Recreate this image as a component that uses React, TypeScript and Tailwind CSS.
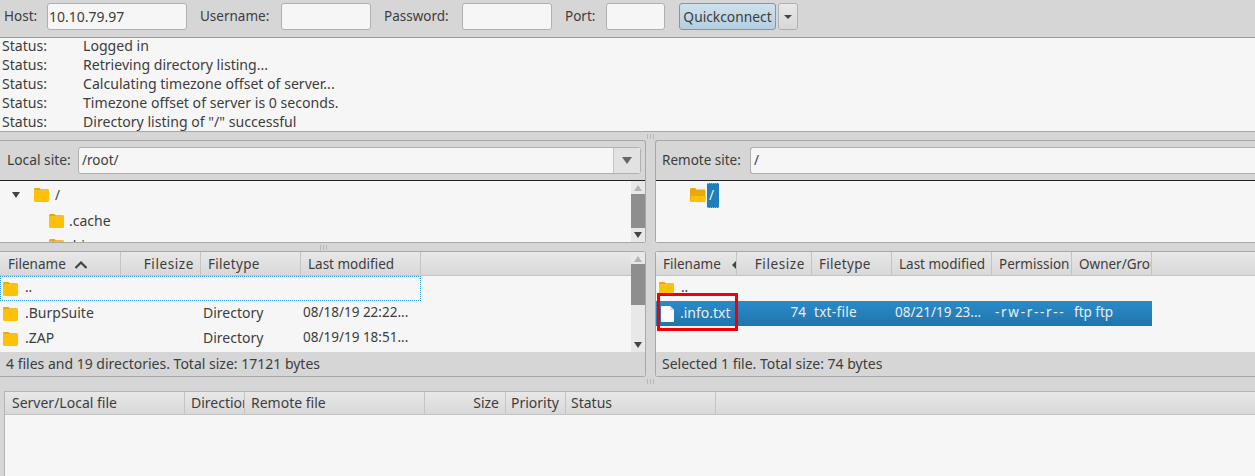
const FONT = "font-['Noto_Sans',sans-serif]";

function Folder({ open = false }: { open?: boolean }) {
    if (open) {
        return (
            <svg width="16" height="14" viewBox="0 0 16 14" className="shrink-0">
                <path d="M0 1.5C0 .7.5 0 1.2 0h4l1.4 1.6h7.6c.8 0 1.2.6 1.2 1.3V14H0z" fill="#e8a90c" />
                <path d="M1.6 8h14.4l-.8 5.2c-.1.5-.4.8-.9.8H0z" fill="#ffc107" />
            </svg>
        );
    }
    return (
        <svg width="15" height="14" viewBox="0 0 15 14" className="shrink-0">
            <path d="M0 1.4C0 .6.6 0 1.3 0h4.2l1.3 1.2h7c.7 0 1.2.6 1.2 1.3V2.800H0z" fill="#e8a90c" />
            <path d="M0 2.600h15v10.200c0 .7-.5 1.200-1.200 1.200H1.200C.5 14 0 13.500 0 12.800z" fill="#ffc107" />
        </svg>
    );
}

function FileIcon() {
    return (
        <svg width="13" height="16" viewBox="0 0 13 16" className="shrink-0">
            <path d="M1 0h8l4 4v11a1 1 0 0 1-1 1H1a1 1 0 0 1-1-1V1a1 1 0 0 1 1-1z" fill="#fafafa" />
            <path d="M9 0l4 4H9z" fill="#d4dde3" />
        </svg>
    );
}

function Field({ label, labelW, inputW, value }: { label: string; labelW: string; inputW: string; value?: string }) {
    return (
        <div className="flex items-center">
            <span className={`${labelW} whitespace-nowrap`}>{label}</span>
            <div className={`${inputW} h-[27px] rounded-[3px] border border-[#b0b0b0] bg-[#f6f6f6] pl-[1px] text-[14px] leading-[25px]`}>{value}</div>
        </div>
    );
}

function Scrollbar({ thumbTop, thumbH }: { thumbTop: string; thumbH: string }) {
    return (
        <div className="flex w-[14px] shrink-0 flex-col items-center bg-[#e8e8e8] py-[4px]">
            <div className="h-0 w-0 border-x-[4px] border-b-[6px] border-x-transparent border-b-[#b4b4b4]" />
            <div className={`w-full ${thumbTop} ${thumbH} bg-[#8e8e8e]`} />
            <div className="mt-auto h-0 w-0 border-x-[4px] border-t-[6px] border-x-transparent border-t-[#444444]" />
        </div>
    );
}

function HeaderCell({ w, right, children }: { w: string; right?: boolean; children: React.ReactNode }) {
    return (
        <div className={`${w} flex h-full shrink-0 items-center overflow-hidden whitespace-nowrap border-r border-[#c4c4c4] pl-[7px] pt-[2px] ${right ? "justify-end pr-[6px]" : ""}`}>
            {children}
        </div>
    );
}

const headerBg = "bg-gradient-to-b from-[#e8e8e8] to-[#d8d8d8]";

function Grip() {
    return (
        <div className="flex gap-[2px]">
            <div className="h-[5px] w-px bg-[#b8b8b8]" />
            <div className="h-[5px] w-px bg-[#b8b8b8]" />
            <div className="h-[5px] w-px bg-[#b8b8b8]" />
        </div>
    );
}

function LocalRow({ name, type, date }: { name: string; type: string; date: string }) {
    return (
        <div className="flex h-[25px] w-[421px] items-center">
            <div className="flex w-[200px] items-center gap-[7px] pl-[3px] text-[14px]">
                <Folder />
                <span className="pb-[2px]">{name}</span>
            </div>
            <span className="w-[100px] pb-[2px] pl-[3px] text-[14px]">{type}</span>
            <span className="pb-[2px] pl-[3px]">{date}</span>
        </div>
    );
}

export default function App() {
    const log = [
        "Logged in",
        "Retrieving directory listing...",
        "Calculating timezone offset of server...",
        "Timezone offset of server is 0 seconds.",
        'Directory listing of "/" successful',
    ];

    return (
        <div className={`${FONT} relative flex h-[476px] w-[1255px] flex-col overflow-hidden bg-[#d6d6d6] text-[13.5px] text-[#3d3d3d]`}>
            {/* quickconnect bar */}
            <div className="flex h-[38px] shrink-0 items-start gap-[13px] border-b border-[#9a9a9a] pl-[4px] pt-[3px] leading-[27px]">
                <Field label="Host:" labelW="w-[43px]" inputW="w-[140px]" value="10.10.79.97" />
                <Field label="Username:" labelW="w-[81px]" inputW="w-[90px]" />
                <Field label="Password:" labelW="w-[78px]" inputW="w-[90px]" />
                <Field label="Port:" labelW="w-[41px]" inputW="w-[59px]" />
                <div className="ml-px flex gap-[2px]">
                    <div className="flex h-[27px] w-[97px] items-center justify-center rounded-[3px] border border-[#7f98a8] bg-gradient-to-b from-[#cfe1ec] to-[#b4cfdf] text-[13.8px]">Quickconnect</div>
                    <div className="flex h-[27px] w-[20px] items-center justify-center rounded-[3px] border border-[#b0b0b0] bg-gradient-to-b from-[#e8e8e8] to-[#d8d8d8]">
                        <div className="h-0 w-0 border-x-[4px] border-t-[4px] border-x-transparent border-t-[#444444]" />
                    </div>
                </div>
            </div>

            {/* message log */}
            <div className="h-[94px] shrink-0 border-b border-[#a8a8a8] bg-[#f6f6f6] pl-[2px] text-[14.1px] leading-[15px]">
                {log.map((m) => (
                    <div key={m} className="flex h-[19px] items-center whitespace-nowrap first:h-[17px] first:items-start">
                        <span className="w-[81px]">Status:</span>
                        <span>{m}</span>
                    </div>
                ))}
            </div>

            <div className="flex h-[8px] shrink-0 items-center pl-[647px]">
                <Grip />
            </div>

            {/* site panes */}
            <div className="flex h-[237px] shrink-0 gap-[9px]">
                {/* local */}
                <div className="flex w-[646px] shrink-0 flex-col">
                    <div className="flex h-[103px] flex-col rounded-r-[3px] border border-l-0 border-[#a8a8a8]">
                        <div className="flex h-[40px] shrink-0 items-center border-b border-[#222222] pl-[7px]">
                            <span className="w-[71px] whitespace-nowrap text-[13.8px]">Local site:</span>
                            <div className="flex h-[27px] w-[563px] rounded-[3px] border border-[#b0b0b0] bg-[#f6f6f6]">
                                <span className="flex-1 pl-[3px] leading-[25px]">/root/</span>
                                <div className="flex w-[27px] items-center justify-center border-l border-[#c4c4c4] bg-[#e2e2e2]">
                                    <div className="h-0 w-0 border-x-[5px] border-t-[7px] border-x-transparent border-t-[#666666]" />
                                </div>
                            </div>
                        </div>
                        <div className="flex min-h-0 flex-1 bg-[#f6f6f6]">
                            <div className="flex-1 overflow-hidden pt-[1px]">
                                <div className="flex h-[26px] items-center">
                                    <div className="ml-[12px] h-0 w-0 border-x-[4px] border-t-[6px] border-x-transparent border-t-[#444444]" />
                                    <div className="ml-[14px]"><Folder /></div>
                                    <span className="ml-[6px]">/</span>
                                </div>
                                <div className="flex h-[25px] items-center pl-[49px]">
                                    <Folder />
                                    <span className="ml-[5px] text-[14px]">.cache</span>
                                </div>
                                <div className="flex h-[25px] items-center pl-[49px]">
                                    <Folder />
                                    <span className="ml-[5px] text-[14px]">.bin</span>
                                </div>
                            </div>
                            <Scrollbar thumbTop="mt-[3px]" thumbH="h-[34px]" />
                        </div>
                    </div>

                    <div className="flex h-[8px] shrink-0 items-center justify-center">
                        <Grip />
                    </div>

                    <div className="flex min-h-0 flex-1 flex-col rounded-r-[3px] border border-l-0 border-[#a8a8a8] bg-[#f6f6f6]">
                        <div className="flex min-h-0 flex-1">
                            <div className="min-w-0 flex-1">
                                <div className={`flex h-[24px] border-b border-[#c4c4c4] ${headerBg}`}>
                                    <HeaderCell w="w-[121px]">
                                        <span className="ml-px">Filename</span>
                                        <svg width="14" height="8" viewBox="0 0 14 8" className="ml-[8px]">
                                            <path d="M1.500 7L7 1.500 12.500 7" fill="none" stroke="#444444" strokeWidth="2.200" />
                                        </svg>
                                    </HeaderCell>
                                    <HeaderCell w="w-[80px]" right><span className="tracking-[0.6px]">Filesize</span></HeaderCell>
                                    <HeaderCell w="w-[100px]"><span className="tracking-[0.3px]">Filetype</span></HeaderCell>
                                    <HeaderCell w="w-[120px]">Last modified</HeaderCell>
                                </div>
                                <div className="flex h-[25px] w-[421px] items-center gap-[7px] border border-dotted border-[#2a9ad8] pl-[2px]">
                                    <Folder />
                                    <span className="pb-[2px]">..</span>
                                </div>
                                <LocalRow name=".BurpSuite" type="Directory" date="08/18/19 22:22..." />
                                <LocalRow name=".ZAP" type="Directory" date="08/19/19 18:51..." />
                            </div>
                            <Scrollbar thumbTop="mt-[2px]" thumbH="h-[41px]" />
                        </div>
                        <div className="flex h-[24px] shrink-0 items-center bg-[#d6d6d6] pb-[2px] pl-[6px] text-[14px]">4 files and 19 directories. Total size: 17121 bytes</div>
                    </div>
                </div>

                {/* remote */}
                <div className="flex min-w-0 flex-1 flex-col">
                    <div className="flex h-[103px] flex-col rounded-l-[3px] border border-r-0 border-[#a8a8a8]">
                        <div className="flex h-[40px] shrink-0 items-center border-b border-[#222222] pl-[6px]">
                            <span className="w-[88px]">Remote site:</span>
                            <div className="h-[27px] flex-1 rounded-l-[3px] border border-r-0 border-[#b0b0b0] bg-[#f6f6f6] pl-[3px] leading-[25px]">/</div>
                        </div>
                        <div className="flex-1 bg-[#f6f6f6] pl-[34px] pt-[1px]">
                            <div className="flex h-[26px] items-center">
                                <Folder open />
                                <span className="ml-px h-[25px] w-[12px] border-y border-dotted border-[#8ab8d8] bg-[#1f7fbd] pl-[2px] leading-[23px] text-[#f2f2f2]">/</span>
                            </div>
                        </div>
                    </div>

                    <div className="h-[8px] shrink-0" />

                    <div className="flex min-h-0 flex-1 flex-col rounded-l-[3px] border border-r-0 border-[#a8a8a8] bg-[#f6f6f6]">
                        <div className="min-h-0 flex-1">
                            <div className={`flex h-[24px] border-b border-[#c4c4c4] ${headerBg}`}>
                                <HeaderCell w="w-[81px]">
                                    <span>Filename</span>
                                    <div className="ml-[11px] h-0 w-0 shrink-0 border-y-[4px] border-r-[4px] border-y-transparent border-r-[#444444]" />
                                </HeaderCell>
                                <HeaderCell w="w-[75px]" right><span className="tracking-[0.6px]">Filesize</span></HeaderCell>
                                <HeaderCell w="w-[80px]"><span className="tracking-[0.3px]">Filetype</span></HeaderCell>
                                <HeaderCell w="w-[100px]">Last modified</HeaderCell>
                                <HeaderCell w="w-[80px]">Permission</HeaderCell>
                                <HeaderCell w="w-[80px]">Owner/Group</HeaderCell>
                            </div>
                            <div className="flex h-[25px] items-center gap-[7px] pl-[3px]">
                                <Folder />
                                <span className="pb-[2px]">..</span>
                            </div>
                            <div className="flex h-[25px] w-[496px] items-center whitespace-nowrap bg-gradient-to-b from-[#2a8bc8] to-[#1f75ae] text-[#ececec]">
                                <div className="flex w-[81px] items-center gap-[6px] pl-[5px] text-[14px]">
                                    <FileIcon />
                                    <span className="pb-[2px]">.info.txt</span>
                                </div>
                                <span className="w-[69px] pb-[2px] text-right">74</span>
                                <span className="w-[86px] pb-[2px] pl-[8px] tracking-[0.3px]">txt-file</span>
                                <span className="w-[100px] pb-[2px] pl-[3px]">08/21/19 23...</span>
                                <span className="w-[79px] pb-[2px] pl-[3px] tracking-[1.7px]">-rw-r--r--</span>
                                <span className="pb-[2px] pl-[3px]">ftp ftp</span>
                            </div>
                        </div>
                        <div className="flex h-[24px] shrink-0 items-center bg-[#d6d6d6] pb-[2px] pl-[6px] text-[14px]">Selected 1 file. Total size: 74 bytes</div>
                    </div>
                </div>
            </div>

            <div className="h-[14px] shrink-0 pl-[647px] pt-[2px]">
                <Grip />
            </div>

            {/* transfer queue */}
            <div className="ml-[4px] flex min-h-0 flex-1 flex-col border-l border-t border-[#b4b4b4] bg-[#f6f6f6] text-[14px]">
                <div className={`flex h-[23px] shrink-0 border-b border-[#c4c4c4] ${headerBg}`}>
                    <HeaderCell w="w-[180px]"><span className="-mt-[4px]">Server/Local file</span></HeaderCell>
                    <HeaderCell w="w-[60px]"><span className="-ml-px -mt-[4px]">Direction</span></HeaderCell>
                    <HeaderCell w="w-[180px]"><span className="-ml-px -mt-[4px]">Remote file</span></HeaderCell>
                    <HeaderCell w="w-[81px]" right><span className="-mt-[4px]">Size</span></HeaderCell>
                    <HeaderCell w="w-[60px]"><span className="-ml-[2px] -mt-[4px]">Priority</span></HeaderCell>
                    <HeaderCell w="w-[150px]"><span className="-ml-[2px] -mt-[4px]">Status</span></HeaderCell>
                </div>
            </div>

            {/* red annotation */}
            <div className="absolute left-[657px] top-[293px] h-[38px] w-[81px] border-[3px] border-[#f00000]" />
        </div>
    );
}
